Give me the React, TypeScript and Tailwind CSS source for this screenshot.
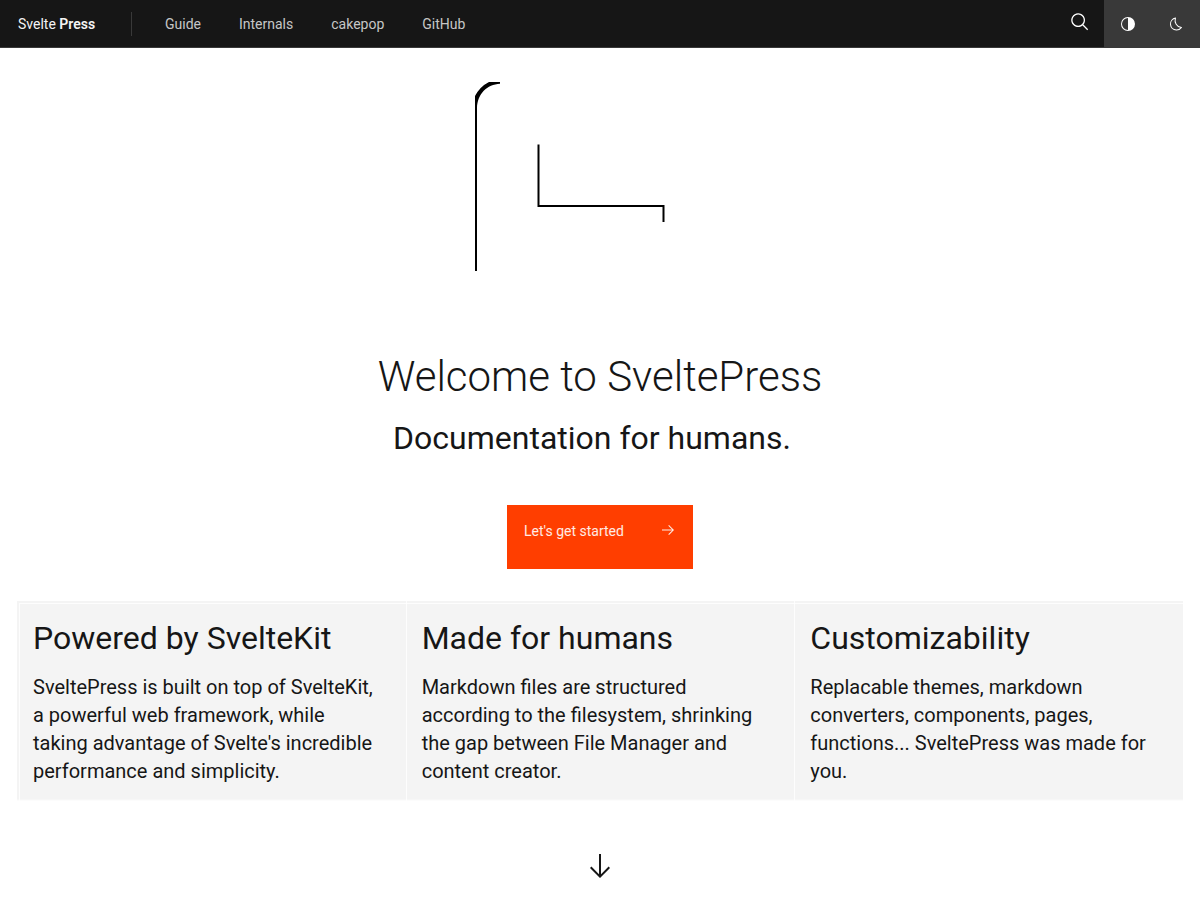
import React from "react";

const links = ["Guide", "Internals", "cakepop", "GitHub"];

const features = [
  {
    title: "Powered by SvelteKit",
    text: "SveltePress is built on top of SvelteKit, a powerful web framework, while taking advantage of Svelte's incredible performance and simplicity.",
  },
  {
    title: "Made for humans",
    text: "Markdown files are structured according to the filesystem, shrinking the gap between File Manager and content creator.",
  },
  {
    title: "Customizability",
    text: "Replacable themes, markdown converters, components, pages, functions... SveltePress was made for you.",
  },
];

function Icon({ d, className }: { d: string; className: string }) {
  return (
    <svg viewBox="0 0 32 32" fill="currentColor" aria-hidden="true" className={className}>
      <path d={d} />
    </svg>
  );
}

function Header() {
  return (
    <header className="flex h-12 items-stretch border-b border-[#393939] bg-[#161616] text-sm text-[#c6c6c6]">
      <a href="#home" className="flex w-[131px] items-center pl-[18px] text-[#f4f4f4]">
        <span>
          Svelte <b className="font-semibold">Press</b>
        </span>
      </a>
      <nav aria-label="Main" className="flex items-center">
        <span className="mr-[14px] h-6 w-px bg-[#393939]" />
        {links.map((link) => (
          <a key={link} href={"#" + link} className="px-[19px]">
            {link}
          </a>
        ))}
      </nav>
      <div className="ml-auto flex text-white">
        <button type="button" aria-label="Search" className="flex w-12 justify-center pt-3">
          <Icon
            className="size-5"
            d="M29,27.5859l-7.5521-7.5521a11.0177,11.0177,0,1,0-1.4141,1.4141L27.5859,29ZM4,13a9,9,0,1,1,9,9A9.01,9.01,0,0,1,4,13Z"
          />
        </button>
        <button type="button" aria-label="Contrast" className="flex w-12 items-center justify-center bg-[#393939]">
          <Icon className="size-4" d="M16 2a14 14 0 1 0 0 28a14 14 0 0 0 0-28ZM4 16A12 12 0 0 1 16 4V28A12 12 0 0 1 4 16Z" />
        </button>
        <button type="button" aria-label="Dark mode" className="flex w-12 items-center justify-center bg-[#393939]">
          <Icon
            className="size-4"
            d="M13.5025,5.4136A15.0755,15.0755,0,0,0,25.096,23.6082a11.1134,11.1134,0,0,1-7.9749,3.3893c-.1385,0-.2782.0051-.4178,0A11.0944,11.0944,0,0,1,13.5025,5.4136M14.98,3a1.0024,1.0024,0,0,0-.1746.0156A13.0959,13.0959,0,0,0,16.63,28.9973c.1641.006.3282,0,.4909,0a13.0724,13.0724,0,0,0,10.702-5.5556,1.0094,1.0094,0,0,0-.7833-1.5644A13.08,13.08,0,0,1,15.8892,4.38,1.0149,1.0149,0,0,0,14.98,3Z"
          />
        </button>
      </div>
    </header>
  );
}

export default function App() {
  return (
    <div className="min-h-screen bg-white font-['Roboto',sans-serif] text-[#161616]">
      <Header />
      <main className="flex flex-col items-center px-[17px]">
        <svg viewBox="0 0 250 250" role="img" aria-label="SveltePress logo" className="mt-8 size-[250px]">
          <path d="M0 191V16Q5 6.500 14 2H25V3.800C12 4.500 2.500 14 2 28V191Z" fill="#000" />
          <path d="M63.500 64.500V126H188.500V142" fill="none" stroke="#000" strokeWidth="2" />
        </svg>
        <h1 className="mt-[22px] text-[42px] leading-[50px] font-light">Welcome to SveltePress</h1>
        <p className="mt-4 mr-4 text-[32px] leading-10">Documentation for humans.</p>
        <a
          href="#guide"
          className="mt-[47px] flex h-16 w-[186px] justify-between bg-[#ff3e00] px-[17px] pt-4 text-sm text-white/90"
        >
          <span>Let's get started</span>
          <Icon
            className="mt-px size-4"
            d="M18 6L16.57 7.393 24.15 15 4 15 4 17 24.15 17 16.57 24.573 18 26 28 16 18 6z"
          />
        </a>
        <section aria-label="Features" className="relative mt-8 grid w-full grid-cols-3 bg-[#f4f4f4]">
          {features.map((f) => (
            <article key={f.title} className="border-l border-white/80 py-4 pr-6 pl-[15px] first:border-transparent">
              <h2 className="text-[32px] leading-[42px]">{f.title}</h2>
              <p className="mt-[14px] text-xl leading-7">{f.text}</p>
            </article>
          ))}
          <div className="pointer-events-none absolute inset-0 mt-0.5 ml-0.5 border-t border-l border-white/80" />
          <div className="pointer-events-none absolute inset-x-0 bottom-0 h-0.5 bg-linear-to-b from-transparent to-white" />
        </section>
        <a href="#more" aria-label="Scroll down" className="mt-[49px]">
          <Icon
            className="size-8"
            d="M24.59 16.59L17 24.17 17 4 15 4 15 24.17 7.410 16.59 6 18 16 28 26 18 24.59 16.59z"
          />
        </a>
      </main>
    </div>
  );
}
